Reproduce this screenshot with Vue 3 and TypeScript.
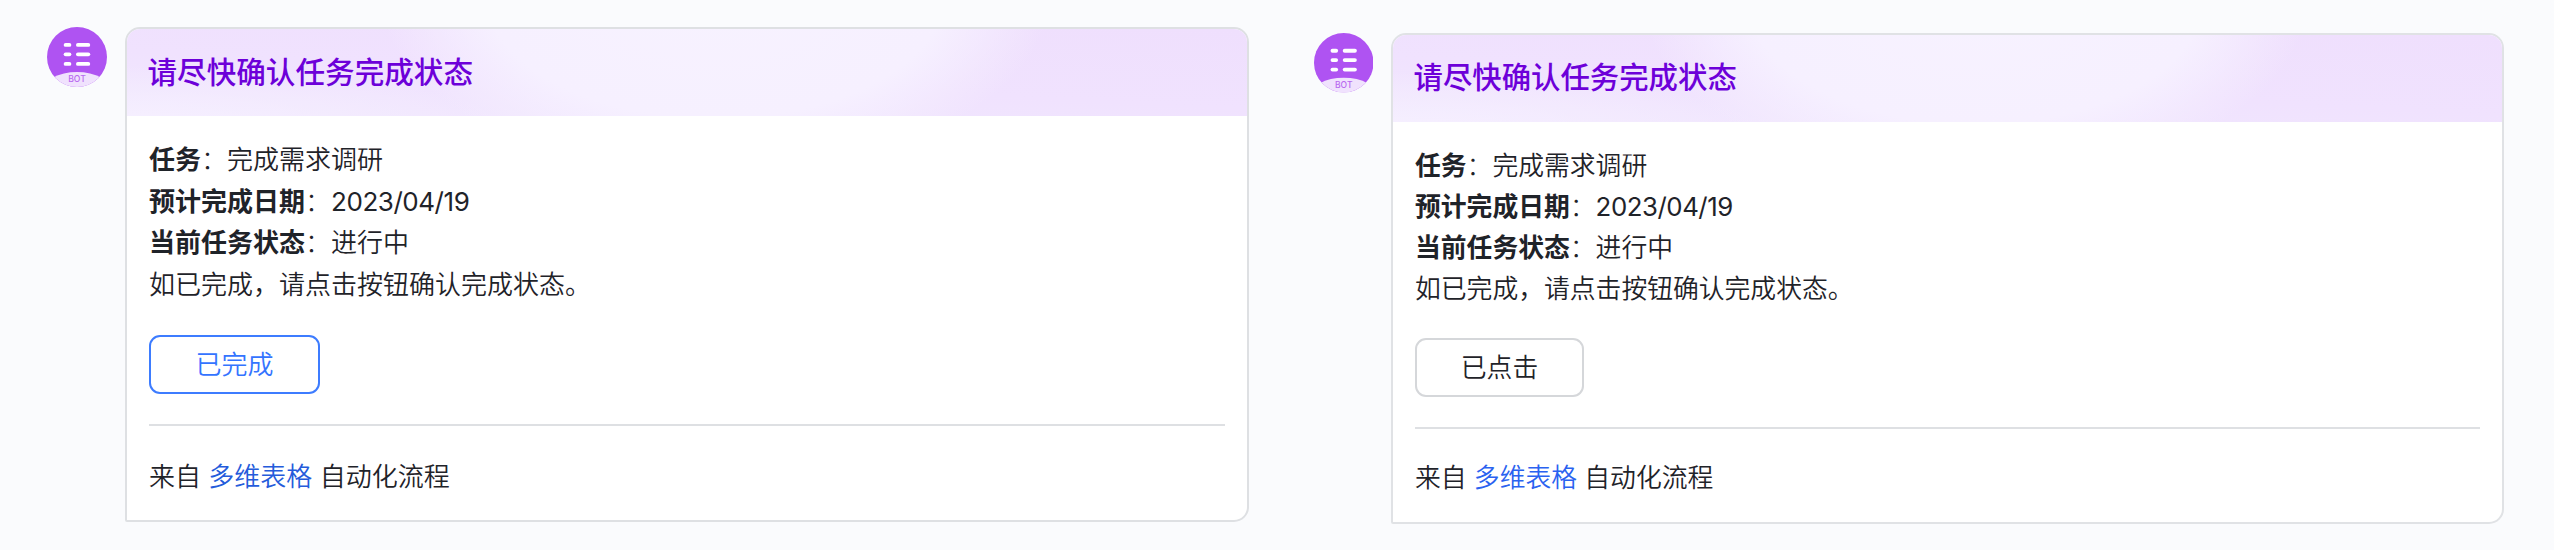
<script setup lang="ts">
interface Card {
  variant: 'pending' | 'clicked'
  action: string
}

const cards: Card[] = [
  { variant: 'pending', action: '已完成' },
  { variant: 'clicked', action: '已点击' },
]

const fields: { label: string; value: string }[] = [
  { label: '任务', value: '完成需求调研' },
  { label: '预计完成日期', value: '2023/04/19' },
  { label: '当前任务状态', value: '进行中' },
]
</script>

<template>
  <main class="board">
    <section v-for="card in cards" :key="card.variant" class="message" :class="card.variant">
      <svg class="avatar" viewBox="0 0 60 60">
        <defs>
          <clipPath :id="'disc-' + card.variant"><circle cx="30" cy="30" r="30" /></clipPath>
        </defs>
        <g :clip-path="`url(#disc-${card.variant})`">
          <rect width="60" height="60" fill="#af53f2" />
          <ellipse cx="30" cy="64" rx="34" ry="19" fill="#f0e2fd" />
        </g>
        <g fill="#fff">
          <rect x="16.7" y="16" width="7.6" height="3.8" rx="1.9" />
          <rect x="29" y="16" width="14.2" height="3.8" rx="1.9" />
          <rect x="16.7" y="25.4" width="7.6" height="3.8" rx="1.9" />
          <rect x="29" y="25.4" width="14.2" height="3.8" rx="1.9" />
          <rect x="16.7" y="35" width="7.6" height="3.8" rx="1.9" />
          <rect x="29" y="35" width="14.2" height="3.8" rx="1.9" />
        </g>
        <text x="30" y="55.2" text-anchor="middle" class="bot">BOT</text>
      </svg>
      <article class="card">
        <header class="head">请尽快确认任务完成状态</header>
        <div class="body">
          <p v-for="f in fields" :key="f.label" class="line">
            <b>{{ f.label }}</b><span class="colon">：</span><span :class="{ date: f.value.includes('/') }">{{ f.value }}</span>
          </p>
          <p class="line">如已完成，请点击按钮确认完成状态。</p>
          <button class="action">{{ card.action }}</button>
          <hr class="rule" />
          <p class="source">来自 <a class="link">多维表格</a> 自动化流程</p>
        </div>
      </article>
    </section>
  </main>
</template>

<style>
body {
  margin: 0;
  background: #fafbfd;
}
</style>

<style scoped>
.board {
  box-sizing: border-box;
  width: 2554px;
  height: 550px;
  display: flex;
  align-items: flex-start;
  overflow: hidden;
  background: #fafbfd;
  font-family: Inter, "Noto Sans CJK SC", sans-serif;
  font-weight: 350;
  color: #1f2329;
}

.message {
  display: flex;
  align-items: flex-start;
}

.pending {
  --title: 29.6px;
  --text: 26px;
  --line: 41.5px;
  --accent: #3d7cff;
  --button-text: #3474ff;
  --edge: #dee0e3;
  padding: 27px 0 0 47px;
}

.clicked {
  --title: 29.4px;
  --text: 25.8px;
  --line: 41.2px;
  --accent: #d5d7da;
  --button-text: #1f2329;
  --edge: #e0e2e5;
  padding: 33px 0 0 64.5px;
}

.avatar {
  width: 60px;
  height: 60px;
  flex: none;
  margin-right: 18px;
}

.clicked .avatar {
  width: 59.5px;
  height: 59.5px;
}

.bot {
  font: 500 8.6px Inter, sans-serif;
  fill: #b96af0;
}

.card {
  box-sizing: border-box;
  width: 1124px;
  height: 495px;
  border: 2px solid var(--edge);
  border-radius: 15px 15px 15px 2px;
  background: #fff;
  overflow: hidden;
}

.clicked .card {
  width: 1113px;
  height: 490.5px;
}

.head {
  box-sizing: border-box;
  height: 87px;
  padding-left: 20.5px;
  font-size: var(--title);
  font-weight: 500;
  line-height: 86px;
  color: #6d00d9;
  background:
    radial-gradient(ellipse 30% 210% at 52.5% -40%, #f7f2ff 0%, #f6f0ff 68%, rgba(246, 240, 255, 0) 100%),
    radial-gradient(ellipse 34% 70% at 0% 112%, #f6f0ff 0%, rgba(246, 240, 255, 0) 100%),
    linear-gradient(183deg, #efdffd 0%, #f0e2fe 55%, #f1e8fe 100%);
}

.clicked .head {
  line-height: 85px;
}

.body {
  padding: 23px 22px 0 22px;
  font-size: var(--text);
}

.clicked .body {
  padding-top: 22.5px;
}

.line,
.source {
  margin: 0;
  height: var(--line);
  line-height: var(--line);
  white-space: pre;
}

.line b {
  font-weight: 700;
}

.colon {
  font-weight: 300;
}

.date {
  font-weight: 400;
  letter-spacing: -0.45px;
}

.action {
  display: block;
  box-sizing: border-box;
  width: 171px;
  height: 59px;
  margin: 30px 0 0;
  padding: 0;
  border: 2px solid var(--accent);
  border-radius: 11px;
  background: #fff;
  color: var(--button-text);
  font-family: inherit;
  font-size: inherit;
  font-weight: inherit;
  line-height: 55px;
}

.clicked .action {
  width: 169px;
  margin-top: 28.7px;
  line-height: 56px;
}

.rule {
  height: 2px;
  margin: 30px 0 30px;
  border: 0;
  background: #dee0e3;
}

.clicked .rule {
  margin-bottom: 28.5px;
}

.link {
  color: #245bdb;
}

.clicked .link {
  color: #2a62f0;
}
</style>
